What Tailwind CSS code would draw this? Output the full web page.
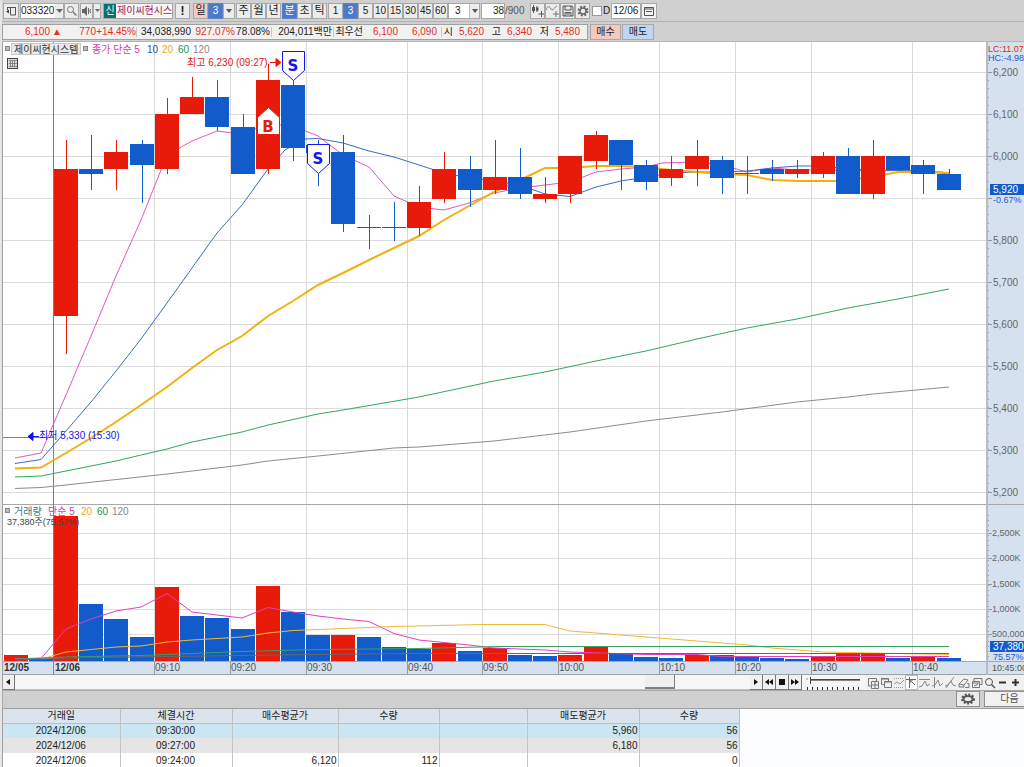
<!DOCTYPE html>
<html lang="ko">
<head>
<meta charset="utf-8">
<title>제이씨현시스템 033320</title>
<meta name="viewport" content="width=device-width, initial-scale=1">
<script src="https://cdn.jsdelivr.net/npm/@tailwindcss/browser@4"></script>
</head>
<body class="min-h-screen overflow-hidden bg-[#d0d0d0] font-['Liberation_Sans','Noto_Sans_CJK_KR',sans-serif] text-[10px] leading-none text-[#222]">
<div class="flex min-h-screen flex-col border-l-2 border-[#e6e6e6]">

<!-- chart toolbar -->
<header class="flex h-[22px] items-center whitespace-nowrap border-b border-[#b4b4b4] pl-px">
  <button aria-label="창" class="flex h-4 w-4 items-center justify-center border border-[#a8a8a8] bg-[#ececec]"><svg width="11" height="11" viewBox="0 0 11 11" fill="none" stroke="#555"><path d="M1 2.500h9M4.500 3v7h5V3M1.500 3v2"/><path d="M0 6.500l3-2v4z" fill="#444" stroke="none"/></svg></button>
  <div class="ml-px flex h-4 border border-[#a8a8a8] bg-white">
    <input aria-label="종목코드" value="033320" class="w-[34px] bg-white outline-none">
    <button aria-label="종목 목록" class="flex w-2 items-center justify-center bg-[#ececec]"><svg width="7" height="4"><path d="M0 0h7L3.500 4z" fill="#666"/></svg></button>
  </div>
  <button aria-label="검색" class="flex h-4 w-[15px] items-center justify-center border border-[#a8a8a8] bg-[#ececec]"><svg width="11" height="11" fill="none" stroke="#777"><circle cx="4.500" cy="4.500" r="3"/><path d="M7 7l3.500 3.500" stroke-width="1.500"/></svg></button>
  <button aria-label="소리" class="ml-px flex h-4 w-[13px] items-center justify-center border border-[#a8a8a8] bg-[#ececec]"><svg width="10" height="10"><path d="M0 3h2l3-3v10L2 7H0z" fill="#666"/><path d="M6.500 2v6M6 5h3M8.500 3v1M8.500 6v1" stroke="#666"/></svg></button>
  <button aria-label="소리 설정" class="flex h-4 w-2 items-center justify-center border border-[#a8a8a8] bg-[#ececec]"><svg width="5" height="3"><path d="M0 0h5L2.500 3z" fill="#666"/></svg></button>
  <div class="ml-0.5 flex h-4 w-[70px] items-center overflow-hidden border border-[#a8a8a8] bg-[#f6f6f6]">
    <span class="flex h-full w-3 shrink-0 items-center justify-center bg-[#0d7070] text-white">신</span>
    <span class="pl-px text-[#a01860]">제이씨현시스</span>
  </div>
  <button class="ml-0.5 h-4 w-[15px] border border-[#a8a8a8] bg-[#ececec] text-[12px] font-bold">!</button>
  <button class="ml-[3px] h-4 w-[15px] border border-[#a8a8a8] bg-[#f5cac4] text-[11px]">일</button>
  <button class="h-4 w-[15px] border border-[#5c82c4] bg-[#4c79c8] text-white">3</button>
  <button aria-label="주기 목록" class="flex h-4 w-3 items-center justify-center border border-[#a8a8a8] bg-[#ececec]"><svg width="6" height="4"><path d="M0 0h6L3 4z" fill="#555"/></svg></button>
  <nav aria-label="주기" class="ml-px flex text-[11px]">
    <button class="h-4 w-[15px] border border-[#a8a8a8] bg-[#ececec]">주</button>
    <button class="h-4 w-[15px] border border-[#a8a8a8] bg-[#ececec]">월</button>
    <button class="h-4 w-[15px] border border-[#a8a8a8] bg-[#ececec]">년</button>
    <button class="ml-px h-4 w-[15px] border border-[#5c82c4] bg-[#4c79c8] text-white">분</button>
    <button class="h-4 w-[15px] border border-[#a8a8a8] bg-[#ececec]">초</button>
    <button class="h-4 w-[15px] border border-[#a8a8a8] bg-[#ececec]">틱</button>
  </nav>
  <nav aria-label="분 단위" class="ml-px flex">
    <button class="h-4 w-[15px] border border-[#a8a8a8] bg-[#ececec]">1</button>
    <button class="h-4 w-[15px] border border-[#5c82c4] bg-[#4c79c8] text-white">3</button>
    <button class="h-4 w-[15px] border border-[#a8a8a8] bg-[#ececec]">5</button>
    <button class="h-4 w-[15px] border border-[#a8a8a8] bg-[#ececec]">10</button>
    <button class="h-4 w-[15px] border border-[#a8a8a8] bg-[#ececec]">15</button>
    <button class="h-4 w-[15px] border border-[#a8a8a8] bg-[#ececec]">30</button>
    <button class="h-4 w-[15px] border border-[#a8a8a8] bg-[#ececec]">45</button>
    <button class="h-4 w-[15px] border border-[#a8a8a8] bg-[#ececec]">60</button>
  </nav>
  <div class="relative flex h-4 w-8 border border-[#a8a8a8] bg-white">
    <select aria-label="분" class="w-full appearance-none bg-white pl-1.5 outline-none"><option>3</option></select>
    <span class="pointer-events-none absolute inset-y-0 right-0 flex w-[10px] items-center justify-center border-l border-[#c0c0c0] bg-[#ececec]"><svg width="6" height="4"><path d="M0 0h6L3 4z" fill="#555"/></svg></span>
  </div>
  <input aria-label="표시 개수" value="38" class="ml-px h-4 w-6 border border-[#a8a8a8] bg-white text-right outline-none">
  <span class="w-[21px] text-[#555]">/900</span>
  <button aria-label="봉 추가" class="ml-1 flex h-4 w-[15px] items-center justify-center border border-[#a8a8a8] bg-[#ececec]"><svg width="13" height="13"><path d="M2.500 1v8M6 2v6M10.500 7v6M7.500 10h6" stroke="#555"/><path d="M1 3h3v4H1zM5 3.500h2.500v3H5z" fill="#555"/></svg></button>
  <button aria-label="지표 추가" class="flex h-4 w-[15px] items-center justify-center border border-[#a8a8a8] bg-[#ececec]"><svg width="13" height="13" fill="none" stroke="#777"><path d="M0 6c2-5 3-4 5-1s4-3 6-3M10 7v6M7 10h6"/></svg></button>
  <button aria-label="저장" class="flex h-4 w-[15px] items-center justify-center border border-[#a8a8a8] bg-[#ececec]"><svg width="12" height="12" fill="none" stroke="#555"><path d="M1 1h9l1 1v9H1zM3 1v4h6V1M3 11V7.500h6V11M4 9h4"/></svg></button>
  <button aria-label="설정" class="flex h-4 w-[15px] items-center justify-center border border-[#a8a8a8] bg-[#ececec]"><svg width="12" height="12" fill="none" stroke="#666"><circle cx="6" cy="6" r="4.500" stroke-width="2" stroke-dasharray="2 1.530"/><circle cx="6" cy="6" r="3" stroke-width="1.500"/></svg></button>
  <label class="ml-0.5 flex items-center gap-px"><input type="checkbox" class="h-[10px] w-[10px] appearance-none border border-[#999] bg-white">D</label>
  <input aria-label="날짜" value="12/06" class="ml-px h-4 w-[30px] border border-[#a8a8a8] bg-white pl-px outline-none">
  <button aria-label="달력" class="flex h-4 w-4 items-center justify-center border border-[#a8a8a8] bg-[#f4f4f4]"><svg width="10" height="10" fill="none" stroke="#555"><path d="M.5 1.500h9v8h-9z"/><path d="M0 3h10M2 5.500h6" /></svg></button>
</header>

<!-- quote bar -->
<section class="flex h-5 items-center whitespace-nowrap border-b border-[#b4b4b4]" aria-label="현재가">
  <div class="flex h-4 items-center border border-[#a0a0a0] bg-[#f1f1f1] text-right text-[#e82c1c]">
    <span class="w-[47px]">6,100</span><span class="w-3">▲</span><span class="w-[34px]">770</span><span class="w-[41px] border-r border-[#c8c8c8]">+14.45%</span>
    <span class="w-[54px] text-[#222]">34,038,990</span><span class="w-[44px]">927.07%</span><span class="w-[37px] border-r border-[#c8c8c8] pr-px text-[#222]">78.08%</span>
    <span class="w-[62px] border-r border-[#c8c8c8] pr-px text-[#222]">204,011백만</span>
    <span class="w-[29px] text-[#222]">최우선</span><span class="w-[35px]">6,100</span><span class="w-[44px] border-r border-[#c8c8c8] pr-1">6,090</span>
    <span class="w-[11px] text-[#222]">시</span><span class="w-[31px]">5,620</span><span class="w-[17px] text-[#222]">고</span><span class="w-[31px]">6,340</span><span class="w-[17px] text-[#222]">저</span><span class="w-[38px] pr-[7px]">5,480</span>
  </div>
  <button class="ml-0.5 h-4 w-[31px] border border-[#a8a8a8] bg-[#f5c8c4]">매수</button>
  <button class="ml-px h-4 w-8 border border-[#a8a8a8] bg-[#bfd5f0]">매도</button>
</section>

<!-- price and volume chart -->
<main class="flex h-[633px] border-l border-[#a0a0a0] bg-white">
  <div class="min-w-0 flex-1">
    <svg id="plot" width="100%" height="633" role="img" aria-label="3분봉 차트"></svg>
  </div>
  <div class="w-[38px] shrink-0 overflow-hidden border-l-2 border-[#b8bcc2] bg-[#d5e1ef]">
    <svg id="axis" width="38" height="633" role="img" aria-label="가격축"></svg>
  </div>
</main>

<!-- scroll and drawing tools -->
<section class="flex h-[15px] border-l border-[#a0a0a0] bg-[#f6f6f6]" aria-label="차트 스크롤">
  <button aria-label="왼쪽" class="flex w-3 items-center justify-center border-r border-b border-[#777] bg-[#f0f0f0]"><svg width="5" height="6"><path d="M4 0v6L0 3z" fill="#111"/></svg></button>
  <div class="flex flex-1 justify-end border-b border-[#c4c4c4] pr-[75px]"><span class="w-[30px] border-r border-b-2 border-[#808080] bg-[#efefef]"></span></div>
  <div class="flex *:flex *:w-[13px] *:items-center *:justify-center *:border-r *:border-b *:border-[#777] *:bg-[#f0f0f0]">
    <button aria-label="오른쪽"><svg width="5" height="6"><path d="M0 0v6L4 3z" fill="#111"/></svg></button>
    <button aria-label="뒤로"><svg width="9" height="6"><path d="M4 0v6L0 3zM8 0v6L4 3z" fill="#111"/></svg></button>
    <button aria-label="정지"><svg width="6" height="6"><path d="M0 0h6v6H0z" fill="#111"/></svg></button>
    <button aria-label="앞으로"><svg width="9" height="6"><path d="M0 0v6L4 3zM4 0v6L8 3z" fill="#111"/></svg></button>
  </div>
  <div class="relative ml-1 w-[56px]">
    <svg width="56" height="15" fill="none"><path d="M5 5.500h49" stroke="#888"/><path d="M5 4.500h49M4.500 2v7" stroke="#444"/><path d="M0 4h2" stroke="#888"/><path d="M1.500 12v3M6.500 12v3M11.500 12v3M16.500 12v3M21.500 12v3M26.500 12v3M31.500 12v3M37.500 12v3M42.500 12v3M47.500 12v3M52.500 12v3" stroke="#333"/></svg>
    <input type="range" aria-label="재생 속도" min="0" max="10" value="0" class="absolute inset-0 w-full opacity-0">
  </div>
  <div class="ml-1 flex w-[158px] bg-[#f0f0f0] *:flex *:w-[13px] *:shrink-0 *:items-center *:justify-center">
    <button aria-label="창 추가"><svg width="12" height="12" fill="none" stroke="#777"><path d="M4 9H1.500V1.500h8V4M4.500 4.500h7v7h-7zM8 5v6M5 8h6"/></svg></button>
    <button aria-label="창 겹침"><svg width="12" height="12" fill="none" stroke="#777"><path d="M4 7.500H1.500v-6h7V4M4.500 4.500h7v6h-7zM1 2h8M4 5h8"/></svg></button>
    <button aria-label="추세"><svg width="12" height="12" fill="none" stroke="#999"><path d="M1 1.500h10M1 10.500h10" stroke-dasharray="1 1"/><path d="M1 7l3-2 3 2 4-4"/></svg></button>
    <button aria-label="십자선" class="border border-[#bbb] bg-white"><svg width="12" height="12" fill="none" stroke="#666"><path d="M0 2.500h10M3.500 0v11M4 3l5 5M4 6V3h3"/></svg></button>
    <button aria-label="수평선"><svg width="12" height="12" fill="none" stroke="#888"><path d="M0 2.500h11M0 10l3-1 3-5 2 5 3-2"/></svg></button>
    <button aria-label="수직선"><svg width="12" height="12" fill="none" stroke="#888"><path d="M2.500 0v11M0 9l3-1 3-5 2 6 3-3"/></svg></button>
    <button aria-label="추세선"><svg width="12" height="12" fill="none" stroke="#888"><path d="M1 11L9 0M0 9l3-1 3-4 2 4 3 1"/></svg></button>
    <button aria-label="지우개"><svg width="12" height="12" fill="none" stroke="#777"><path d="M1 7l5-5 4 1-4 5zM1 7v3h5V8M7 10.500h4v-4h-2"/></svg></button>
    <button aria-label="전체 지우기"><svg width="12" height="12" fill="none" stroke="#777"><path d="M3 4V1.500h8v6H9M1.500 4.500h7v6h-7zM1 6h8M3 9l4-2"/></svg></button>
    <button aria-label="돋보기"><svg width="12" height="12" fill="none" stroke="#555"><circle cx="5" cy="5" r="3.500"/><path d="M7.500 7.500L11 11" stroke-width="1.500"/></svg></button>
    <button aria-label="축소"><svg width="9" height="9"><path d="M1 4.500h7" stroke="#333" stroke-width="2"/></svg></button>
    <button aria-label="확대"><svg width="9" height="9"><path d="M1 4.500h7M4.500 1v7" stroke="#333" stroke-width="2"/></svg></button>
  </div>
</section>

<section class="flex h-[18px] items-start justify-end border-t border-l border-[#a8a8a8]">
  <button aria-label="내역 설정" class="flex h-4 w-6 items-center justify-center border border-[#909090] bg-[#ececec]"><svg width="16" height="12" fill="none" stroke="#555"><ellipse cx="8" cy="6" rx="6" ry="4.500" stroke-width="2" stroke-dasharray="2 1.500"/><ellipse cx="8" cy="6" rx="4.500" ry="3" stroke-width="2"/></svg></button>
  <button class="ml-1 h-4 w-10 border border-r-0 border-[#909090] bg-[#f2f2f2] pl-2.5 text-[#555]">다음</button>
</section>

<!-- trade history -->
<section class="flex-1 border-t border-l border-[#a0a0a0] bg-[#fbfdff]">
  <table class="w-[736px] table-fixed border-collapse bg-white [&_td]:h-[15px] [&_td]:border-r [&_td]:border-[#c4c4c4] [&_td]:pr-px [&_td]:text-right [&_th]:h-[14px] [&_th]:border-r [&_th]:border-b [&_th]:border-[#bcc0c4] [&_th]:font-normal">
    <colgroup><col class="w-[117px]"><col class="w-[112px]"><col class="w-[106px]"><col class="w-[101px]"><col class="w-[88px]"><col class="w-[112px]"><col class="w-[100px]"></colgroup>
    <thead class="bg-[#dbe3ed]"><tr><th>거래일</th><th>체결시간</th><th>매수평균가</th><th>수량</th><th></th><th>매도평균가</th><th>수량</th></tr></thead>
    <tbody class="[&_td:nth-child(-n+2)]:text-center">
      <tr class="bg-[#c9e6f2]"><td>2024/12/06</td><td>09:30:00</td><td></td><td></td><td></td><td>5,960</td><td>56</td></tr>
      <tr class="bg-[#e5e5e5]"><td>2024/12/06</td><td>09:27:00</td><td></td><td></td><td></td><td>6,180</td><td>56</td></tr>
      <tr><td>2024/12/06</td><td>09:24:00</td><td>6,120</td><td>112</td><td></td><td></td><td>0</td></tr>
    </tbody>
  </table>
</section>
</div>

<script>
const NS = 'http://www.w3.org/2000/svg';
const RED = '#e81a0a', BLUE = '#125bcb';
function add(parent, tag, attrs, text) {
  const el = document.createElementNS(NS, tag);
  for (const k in attrs) el.setAttribute(k, attrs[k]);
  if (text !== undefined) el.textContent = text;
  parent.appendChild(el);
  return el;
}
const plot = add(document.getElementById('plot'), 'g', { transform: 'translate(-3 -42)' });
const rect = (x, y, w, h, fill, more) => add(plot, 'rect', { x, y, width: w, height: h, fill, ...more });
const line = (x1, y1, x2, y2, stroke) => add(plot, 'path', { d: `M${x1} ${y1}L${x2} ${y2}`, stroke, 'shape-rendering': 'crispEdges' });
const text = (x, y, s, fill, more) => add(plot, 'text', { x, y, fill, ...more }, s);
const curve = (pts, stroke, width = 1) => add(plot, 'polyline', { points: pts, stroke, fill: 'none', 'stroke-width': width });

// grid
const prices = [6200, 6100, 6000, 5900, 5800, 5700, 5600, 5500, 5400, 5300, 5200];
const priceY = p => 72.5 + (6200 - p) * 0.42;
const volumes = [['2,500K', 533], ['2,000K', 558], ['1,500K', 584], ['1,000K', 609], ['500,000', 634]];
prices.forEach(p => line(3, Math.round(priceY(p)) - .5, 3000, Math.round(priceY(p)) - .5, '#dcdcdc'));
volumes.forEach(v => line(3, v[1] + .5, 3000, v[1] + .5, '#dcdcdc'));
const times = [['09:10', 154.5], ['09:20', 230.5], ['09:30', 306.5], ['09:40', 407.5], ['09:50', 482.5], ['10:00', 558.5], ['10:10', 659.5], ['10:20', 735.5], ['10:30', 811.5], ['10:40', 912.5]];
times.forEach(t => line(t[1], 42, t[1], 661, '#d8d8d8'));
line(3, 504.5, 3000, 504.5, '#a8a8a8');
line(53.5, 42, 53.5, 661, '#b86464');
line(3, 437.5, 54, 437.5, '#e06060');

// moving averages
curve('15,458 41,453 66,395 91,336 116,276 141,220 167,155 192,141 217,131 242,134 268,124 293,126 318,136 343,155 369,167 394,196 419,207 444,210 469,203 494,193 520,188 545,185 570,182 596,172 621,169 646,167 662,163 697,162 722,165 747,172 772,168 797,170 823,170 873,171 924,170 949,173', '#e258c0');
curve('15,463.5 41,459.500 66,431 91,402 116,371 141,339 167,303 192,268 217,233 242,205 268,169 285,150 305,139 318,138.500 343,143 369,151 394,157 419,165 444,173 469,178 494,181 520,185 545,194 570,196.500 596,187 621,181 646,177 671,173 697,172 722,172 747,171 772,168 797,166 823,166 848,169 873,170 924,171 949,174', '#3c6cc4');
curve('15,477 41,476 66,471 116,461 141,455 167,449 192,442 242,432 268,425 318,414 343,410 419,397 494,381 545,372 596,361 646,351 697,339 747,328 797,319 848,308 898,299 949,289', '#30a860');
curve('15,488.5 41,487.500 66,485 167,474 217,468 242,465 268,461 318,456 394,448 419,447 494,441 570,432 646,421 722,412 797,402 848,397 873,394 949,387', '#8c8c8c');
curve('15,468.500 41,467.500 66,453 91,438 116,422 141,405 167,387 192,368 217,350 242,336 268,316 293,301 318,285 343,273 369,260 394,248 419,236 444,220 469,206 494,192 520,180 545,168 570,168 596,166 621,166 646,167 671,170 697,172 722,174 747,175 772,180 797,181 835,181 848,180 873,177 898,172 924,172 949,173', '#f0b010', 2);

// candles: [up, body top, body bottom, high, low, volume top, volume up when it differs]
const candles = [
 [1,169,316,140,354,516],[0,169,174,135,190,604],[1,152,169,140,190,619,0],[0,144,165,140,203,637],[1,114,169,98,174,587],[1,97,114,77,114,616,0],
 [0,97,127,80,131,618],[0,127,174,114,174,629],[1,80,169,64,174,586],[0,85,148,80,161,612],[0,145,153,140,186,635],[0,152,224,135,232,635,1],
 [0,227,228,215,249,637],[0,227,228,202,241,647],[1,202,228,186,236,649,0],[1,169,199,152,203,643],[0,169,190,156,207,651],[1,177,190,140,194,648],
 [0,177,194,148,199,655],[1,194,199,177,203,656,0],[1,156,194,156,203,655],[1,135,161,131,169,647],[0,140,165,140,190,653],[0,165,182,160,190,657],
 [1,169,178,156,186,658,0],[1,156,169,140,186,655],[0,160,178,156,194,655],[1,173,174,156,194,657,0],[0,169,174,160,181,658],[1,169,174,160,178,659,0],
 [1,156,174,152,178,656],[0,156,194,148,194,654,1],[1,156,194,140,199,654],[0,156,170,156,170,658],[0,165,174,160,194,657,1],[0,174,190,169,190,658]
];
rect(4, 655, 24, 6, RED); rect(29, 659, 24, 2, BLUE);
candles.forEach(([up, top, bottom, high, low, vol, volUp], i) => {
  const c = Math.round(66 + 25.22 * i), color = up ? RED : BLUE;
  line(c + .5, high, c + .5, low, color);
  rect(c - 12, top, 24, bottom - top, color);
  rect(c - 12, vol, 24, 661 - vol, (volUp === undefined ? up : volUp) ? RED : BLUE);
});

// volume averages
curve('15,658.5 41,658.5 66,629 91,619 116,611 141,607 167,593.5 192,612 217,615 242,618 268,607.5 293,612 318,616 343,619 369,621.5 394,633.5 419,640 444,642.5 469,645 494,648 545,650 570,652 646,654.5 697,654.5 722,656.5 949,656.5', '#e040c0');
curve('41,659 66,652 116,647 141,646 167,642 192,640 242,637 268,633 293,630.5 343,628.5 394,626.5 482,624.5 545,624.5 570,631 596,633 646,637 697,641 747,645 772,648 823,652 873,653 949,654.5', '#f0b838');
curve('15,659 66,657 141,655.5 242,651.5 318,649.5 419,648.5 500,646.5 949,646.5', '#38a064');
curve('15,660 66,658 167,656.5 318,654.5 407,653.5 949,653.5', '#686868');

// trade markers
const tag = (d, color, s, x, y) => {
  add(plot, 'path', { d, fill: '#fff', stroke: color });
  text(x, y, s, color, { 'text-anchor': 'middle', 'font-family': 'DejaVu Sans, sans-serif', 'font-weight': 700, 'font-size': 15 });
};
tag('M282.500 51.500h22v19l-11 10-11-10z', '#1414f0', 'S', 293, 71);
tag('M307.500 144.500h22v19l-11 10-11-10z', '#1414f0', 'S', 318, 164);
tag('M257.500 134.500h22v-17l-11-10-11 10z', '#e81a0a', 'B', 268, 132);
text(187, 66, '최고 6,230 (09:27)', '#e02010');
add(plot, 'path', { d: 'M270 62.500h6M276 58.500v8l5-4z', stroke: RED, fill: RED });
text(39, 439, '최저 5,330 (15:30)', '#1414e0');
add(plot, 'path', { d: 'M39 436.500h-6M33 432.500v8l-5-4z', stroke: '#1010f0', fill: '#1010f0' });

// legends
const bullet = (x, y) => rect(x, y, 4, 4, '#bbb', { stroke: '#888' });
bullet(5.500, 46.500);
rect(11.500, 43.500, 69, 11, '#e9e9e9', { stroke: '#c8c8c8' });
text(14, 53, '제이씨현시스템', '#333');
bullet(83.500, 46.500);
text(92, 53, '종가 단순 5', '#d838b0');
text(147, 53, '10', '#1c50b4'); text(162, 53, '20', '#eaaa18'); text(178, 53, '60', '#18944c'); text(193, 53, '120', '#888');
rect(7.500, 58.500, 10, 10, '#ddd', { stroke: '#444' });
add(plot, 'path', { d: 'M9 60.500h8M10.500 61v6M12.500 61v6M14.500 61v6M9 63.500h8M9 66.500h8', stroke: '#666', 'stroke-width': .7 });
bullet(5.500, 508.500);
text(14, 515, '거래량', '#2c8088'); text(48, 515, '단순 5', '#d838b0');
text(81, 515, '20', '#eaaa18'); text(97, 515, '60', '#18944c'); text(112, 515, '120', '#888');
text(7, 525, '37,380주(75.57%)', '#444', { 'font-size': 9 });

// time axis
rect(3, 661, 3000, 14, '#d5e1ef');
line(3, 661.500, 3000, 661.500, '#a8a8a8');
line(3, 674.500, 3000, 674.500, '#a0a0a0');
line(53.5, 661, 53.5, 675, '#888');
text(4, 671, '12/05', '#333', { 'font-weight': 700 });
text(55, 671, '12/06', '#333', { 'font-weight': 700 });
times.forEach(([s, x]) => { line(x, 661, x, 675, '#999'); text(x + .5, 671, s, '#555'); });

// value axis
const axis = add(document.getElementById('axis'), 'g', { transform: 'translate(-988 -42)' });
const aText = (x, y, s, fill, size = 10) => add(axis, 'text', { x, y, fill, 'font-size': size }, s);
const tick = (y, w) => add(axis, 'path', { d: `M988 ${y}h${w}`, stroke: '#999' });
for (let y = 72.5 - 8.4; y < 500; y += 8.4) tick(Math.round(y) - .5, 1);
for (let y = 514.5; y < 661; y += 5.06) tick(Math.round(y) + .5, 1);
prices.forEach(p => { const y = Math.round(priceY(p)); tick(y - .5, 4); if (p !== 5900) aText(993, y + 3, p.toLocaleString('en-US'), '#666'); });
volumes.forEach(([s, y]) => { tick(y + .5, 4); aText(992, y + 3, s, '#666', 9); });
add(axis, 'path', { d: 'M986 504.500h40M986 661.500h40M986 674.500h40', stroke: '#a8a8a8' });
aText(988, 52, 'LC:11.07', '#e02818', 9); aText(988, 61, 'HC:-4.98', '#2058c8', 9);
add(axis, 'rect', { x: 990, y: 184, width: 36, height: 11, fill: BLUE });
aText(993, 193, '5,920', '#fff'); aText(993, 203, '-0.67%', '#2058c8', 9);
add(axis, 'rect', { x: 990, y: 641, width: 36, height: 11, fill: BLUE });
aText(993, 650, '37,380', '#fff'); aText(993, 660, '75.57%', '#2058c8', 9);
aText(992, 671, '10:45:00', '#555', 9);
</script>
</body>
</html>
